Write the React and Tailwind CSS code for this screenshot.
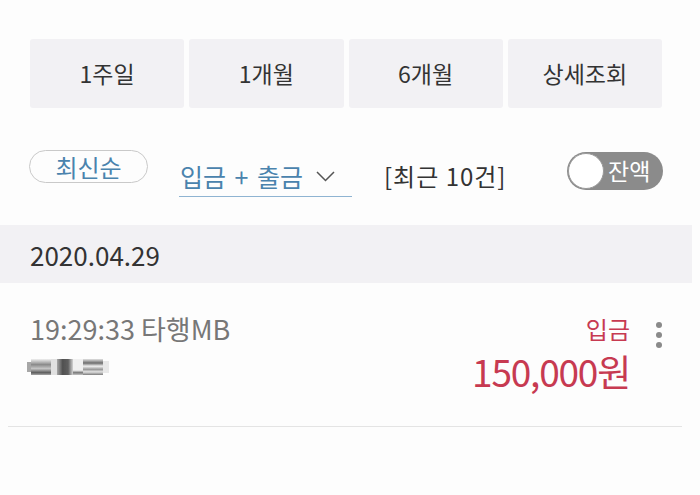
const periods = ['1주일', '1개월', '6개월', '상세조회']

export default function App() {
  return (
    <div className="w-[700px] h-[495px] bg-[#fdfdfd] overflow-hidden" style={{ fontFamily: '"Noto Sans CJK KR", "Noto Sans", sans-serif' }}>
      {/* period buttons */}
      <div className="flex gap-[5px] ml-[30px] pt-[39px] w-[632px]">
        {periods.map((p) => (
          <button key={p} className="flex-1 h-[69px] rounded-[3px] bg-[#f2f1f4] text-[23px] text-[#333]">
            {p}
          </button>
        ))}
      </div>

      {/* filters */}
      <div className="flex items-start mt-[42px] pl-[29px] h-[47px]">
        <div className="w-[119px] h-[33px] rounded-full border border-[#c9c9c9] flex items-center justify-center text-[24px] leading-none text-[#4a83ad]">
          최신순
        </div>
        <div className="ml-[31px] w-[173px] h-[47px] border-b border-[#8fb4d2] flex items-end pb-[4px] pl-[1px] text-[25px] leading-[32px] text-[#4a83ad]">
          <span className="whitespace-pre [word-spacing:3px]">입금 + 출금</span>
          <svg className="ml-[13px] mb-[10px]" width="19" height="11" viewBox="0 0 19 11" fill="none">
            <polyline points="1,1 9.5,9.5 18,1" stroke="#555" strokeWidth="1.5" />
          </svg>
        </div>
        <div className="ml-[32px] mt-[10px] w-[128px] text-[24px] leading-[32px] text-[#333] tracking-[1px] whitespace-nowrap">[최근 10건]</div>
        <div className="ml-[55px] mt-[2px] w-[96px] h-[38px] rounded-full bg-[#8b8b8b] flex items-center pl-[1px]">
          <div className="w-[36px] h-[36px] rounded-full bg-white border border-[#9a9a9a]" />
          <span className="ml-[4px] text-[23px] leading-none text-white pb-[2px]">잔액</span>
        </div>
      </div>

      {/* date header */}
      <div className="mt-[28px] w-[692px] h-[58px] bg-[#f2f1f4] flex items-center pl-[30px] text-[26px] text-[#333]">
        2020.04.29
      </div>

      {/* transaction */}
      <div className="ml-[8px] w-[674px] h-[144px] border-b border-[#e4e4e4] flex pt-[30px]">
        <div className="pl-[22px] flex-1">
          <div className="text-[27px] leading-[32px] text-[#777]">19:29:33 타행MB</div>
          <div className="mt-[14px] ml-[-3px] flex items-center opacity-85">
            <div className="w-[4px] h-[10px] bg-[#999]" />
            <div className="w-[20px] h-[16px] bg-[linear-gradient(#eee_0,#777_35%,#bbb_60%,#444_85%,#999_100%)]" />
            <div className="w-[6px] h-[16px] bg-[#ddd]" />
            <div className="w-[16px] h-[16px] bg-[linear-gradient(90deg,#999,#333_35%,#444_70%,#ccc)]" />
            <div className="w-[10px] h-[16px] bg-[linear-gradient(#eee_0,#eee_70%,#666_85%,#bbb_100%)]" />
            <div className="w-[20px] h-[16px] bg-[linear-gradient(#ddd_0,#555_25%,#eee_45%,#888_65%,#ddd_80%,#666_100%)]" />
            <div className="w-[6px] h-[12px] bg-[#e5e5e5]" />
          </div>
        </div>
        <div className="flex flex-col items-end pr-[52px] text-[#c73a51]">
          <div className="text-[24px] leading-[32px]">입금</div>
          <div className="mt-[6px] text-[37px] leading-[40px] tracking-[-1.2px]">150,000원</div>
        </div>
        <div className="absolute left-[656px] top-[322px] flex flex-col gap-[4px]">
          <span className="w-[6px] h-[6px] rounded-full bg-[#8a8a8a]" />
          <span className="w-[6px] h-[6px] rounded-full bg-[#8a8a8a]" />
          <span className="w-[6px] h-[6px] rounded-full bg-[#8a8a8a]" />
        </div>
      </div>
    </div>
  )
}
